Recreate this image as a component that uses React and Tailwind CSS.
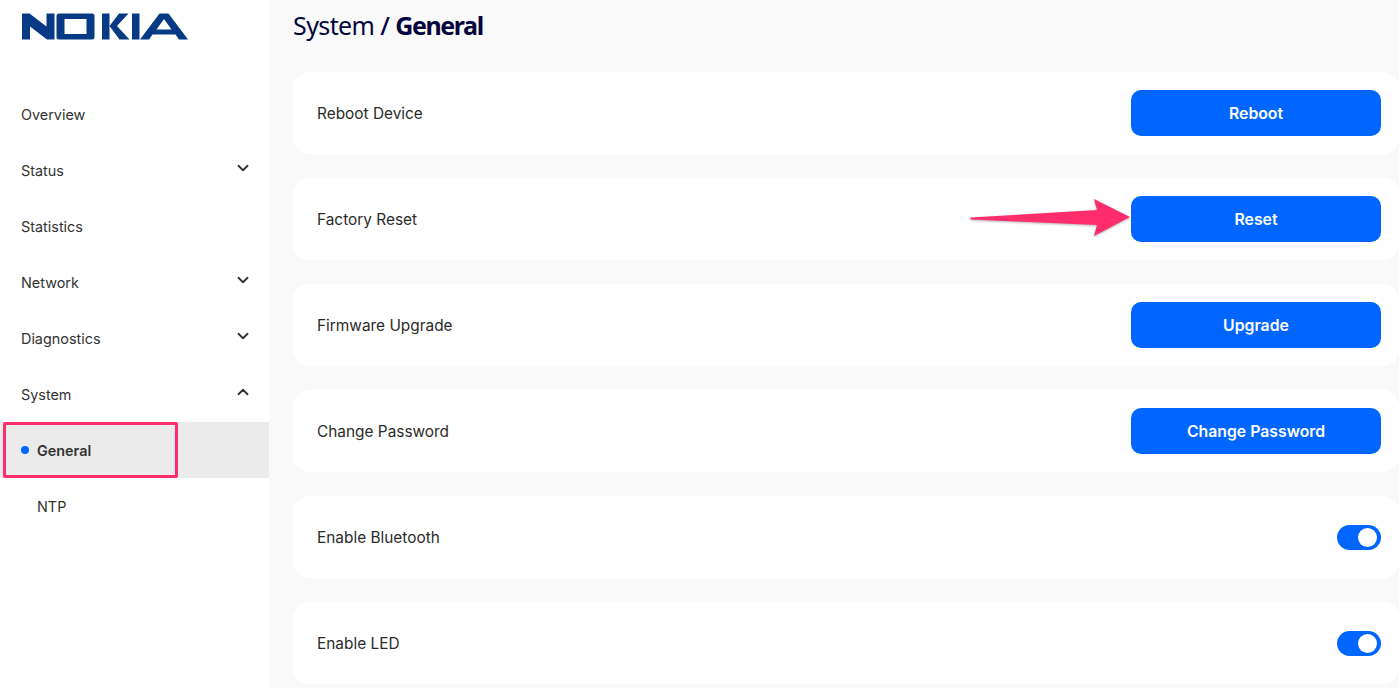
import React from "react";
import { ChevronDown, ChevronUp } from "lucide-react";

const sans = "font-['Inter','Liberation_Sans',sans-serif]";

function Logo() {
  return (
    <svg width="166" height="27" viewBox="0 0 166 27" className="block" aria-label="NOKIA" fill="#063a84">
      <path d="M0 26.500V0.500H7.500L24.500 13.500V0.500H32.500V26.500H25L8 13.500V26.500Z" />
      <path fillRule="evenodd" d="M37 0.500H70Q72.500 0.500 72.500 3V24Q72.500 26.500 70 26.500H37Q34.500 26.500 34.500 24V3Q34.500 0.500 37 0.500ZM42.500 6V21H64.500V6Z" />
      <path d="M80 0.500H87.500V26.500H80ZM87.500 13L97 0.500H106.500L95 13L107.500 26.500H97.500Z" />
      <path d="M110 0.500H117.500V26.500H110Z" />
      <path fillRule="evenodd" d="M137.500 0.500H146.500L166 26.500H157L153.500 21.500H130.500L127 26.500H118ZM134.500 16.500H149.500L142 6Z" />
    </svg>
  );
}

function NavItem({ label, chevron, active, child }) {
  return (
    <div className={`h-14 flex items-center justify-between pr-[17px] ${child ? "pl-[37px]" : "pl-[21px]"} ${active ? "bg-[#ebebeb]" : ""} relative`}>
      {active && <span className="absolute left-[21px] top-[24px] w-2 h-2 rounded-full bg-[#0066ff]" />}
      <span className={`text-[14.4px] text-[#333333] pt-[2px] ${active ? "font-semibold" : ""}`}>{label}</span>
      {chevron === "down" && <ChevronDown size={18} strokeWidth={2.4} className="text-[#333333] -mt-1" />}
      {chevron === "up" && <ChevronUp size={18} strokeWidth={2.4} className="text-[#333333] -mt-1" />}
    </div>
  );
}

function Card({ label, button, toggle }) {
  return (
    <div className="h-[82px] shrink-0 bg-white rounded-2xl flex items-center justify-between pl-6 pr-[18px]">
      <span className="text-[15.4px] text-[#2b2b2b] pt-[2px]">{label}</span>
      {button && (
        <button className="w-[250px] h-[46px] pt-[2px] rounded-[10px] bg-[#0066ff] text-white text-[15.8px] font-semibold">{button}</button>
      )}
      {toggle && (
        <span className="w-11 h-[25px] rounded-full bg-[#0066ff] flex items-center justify-end pr-[4px]">
          <span className="w-[19px] h-[19px] rounded-full bg-white" />
        </span>
      )}
    </div>
  );
}

export default function App() {
  return (
    <div className={`h-[688px] w-[1399px] overflow-hidden flex bg-[#f9f9f9] relative ${sans}`}>
      <aside className="w-[269px] shrink-0 bg-white">
        <div className="pl-[22px] pt-[13px] h-[86px]"><Logo /></div>
        <NavItem label="Overview" />
        <NavItem label="Status" chevron="down" />
        <NavItem label="Statistics" />
        <NavItem label="Network" chevron="down" />
        <NavItem label="Diagnostics" chevron="down" />
        <NavItem label="System" chevron="up" />
        <NavItem label="General" child active />
        <NavItem label="NTP" child />
      </aside>
      <main className="flex-1 min-w-0 pl-6">
        <h1 className="h-[72px] pt-[7px] text-[25px] leading-9 text-[#06063f] font-['Noto_Sans',sans-serif] tracking-[-0.6px]">
          System <span className="font-medium">/</span> <span className="font-bold tracking-[-1.4px]">General</span>
        </h1>
        <div className="flex flex-col gap-6">
          <Card label="Reboot Device" button="Reboot" />
          <Card label="Factory Reset" button="Reset" />
          <Card label="Firmware Upgrade" button="Upgrade" />
          <Card label="Change Password" button="Change Password" />
          <Card label="Enable Bluetooth" toggle />
          <Card label="Enable LED" toggle />
        </div>
      </main>
      <div className="absolute left-[3px] top-[422px] w-[175px] h-14 border-[3px] border-[#ff2d6c] rounded-[2px]" />
      <svg className="absolute left-[965px] top-[192px]" width="175" height="50" viewBox="965 192 175 50">
        <path d="M971 217.500L1097 210L1094 199L1130 217L1094 236L1097 225L971 219.500Q969.500 218.500 971 217.500Z" fill="#ff2d6c" style={{ filter: "drop-shadow(0 1px 1px rgba(0,0,0,0.3))" }} />
      </svg>
    </div>
  );
}
